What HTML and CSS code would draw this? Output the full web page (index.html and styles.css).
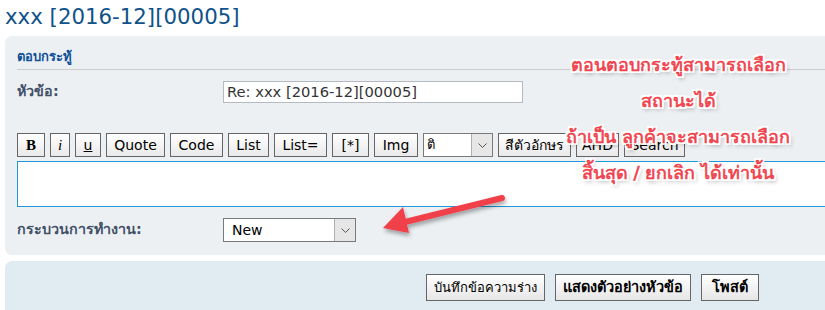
FILE: index.html
```html
<!DOCTYPE html>
<html lang="th">
<head>
<meta charset="utf-8">
<link rel="stylesheet" href="styles.css">
</head>
<body>
<div class="page">
  <h2 class="title">xxx [2016-12][00005]</h2>
  <div class="panel">
    <h3 class="panel-head">ตอบกระทู้</h3>
    <div class="row row-subject">
      <label class="lbl">หัวข้อ:</label>
      <div class="input">Re: xxx [2016-12][00005]</div>
    </div>
    <div class="toolbar">
      <span class="btn b">B</span>
      <span class="btn i">i</span>
      <span class="btn u">u</span>
      <span class="btn w-quote">Quote</span>
      <span class="btn w-code">Code</span>
      <span class="btn w-list">List</span>
      <span class="btn w-liste">List=</span>
      <span class="btn w-star">[*]</span>
      <span class="btn w-img">Img</span>
      <span class="sel sel-size"><span class="sel-text">ติ</span><span class="sel-arrow"><svg width="9" height="5" viewBox="0 0 9 5"><path d="M0.5 0.5 L4.5 4.5 L8.5 0.5" fill="none" stroke="#555" stroke-width="1"/></svg></span></span>
      <span class="btn w-color">สีตัวอักษร</span>
      <span class="btn w-ahd">AHD</span>
      <span class="btn w-search">Search</span>
    </div>
    <div class="textarea"></div>
    <div class="row row-status">
      <label class="lbl">กระบวนการทำงาน:</label>
      <span class="sel sel-status"><span class="sel-text">New</span><span class="sel-arrow"><svg width="9" height="5" viewBox="0 0 9 5"><path d="M0.5 0.5 L4.5 4.5 L8.5 0.5" fill="none" stroke="#555" stroke-width="1"/></svg></span></span>
    </div>
  </div>
  <div class="panel2">
    <span class="btn2">บันทึกข้อความร่าง</span>
    <span class="btn2 bold">แสดงตัวอย่างหัวข้อ</span>
    <span class="btn2 bold wide">โพสต์</span>
  </div>

  <div class="note">
    <div class="note-line">ตอนตอบกระทู้สามารถเลือก</div>
    <div class="note-line">สถานะได้</div>
    <div class="note-line">ถ้าเป็น ลูกค้าจะสามารถเลือก</div>
    <div class="note-line">สิ้นสุด / ยกเลิก ได้เท่านั้น</div>
  </div>
  <svg class="arrow" width="140" height="60" viewBox="0 0 140 60">
    <defs>
      <filter id="sh" x="-20%" y="-40%" width="140%" height="180%">
        <feDropShadow dx="1" dy="3" stdDeviation="2" flood-color="#000" flood-opacity="0.35"/>
      </filter>
    </defs>
    <g filter="url(#sh)">
      <line x1="127" y1="8" x2="30" y2="32" stroke="#f0404a" stroke-width="6" stroke-linecap="round"/>
      <path d="M8 38 L28 17 L34 43 Z" fill="#f0404a"/>
    </g>
  </svg>
</div>
</body>
</html>
```

FILE: styles.css
```css
html, body {
  margin: 0;
  padding: 0;
  background: #ffffff;
}
.page {
  position: relative;
  width: 825px;
  height: 310px;
  overflow: hidden;
  font-family: "DejaVu Sans", Tahoma, sans-serif;
}
.title {
  margin: 0;
  padding: 0 0 0 5px;
  height: 36px;
  line-height: 34px;
  font-size: 21.3px;
  font-weight: normal;
  color: #105289;
  white-space: nowrap;
}
.panel {
  margin-left: 5px;
  width: 860px;
  height: 219px;
  box-sizing: border-box;
  background: #ecf0f3;
  border-radius: 7px;
  padding: 10px 12px 0 12px;
}
.panel-head {
  margin: 0;
  height: 23px;
  line-height: 22px;
  font-size: 13px;
  font-weight: bold;
  color: #115098;
  border-bottom: 1px solid #cccccc;
}
.row {
  display: flex;
  align-items: center;
}
.row-subject {
  margin-top: 11px;
  height: 22px;
}
.lbl {
  width: 206px;
  flex: none;
  font-size: 14.3px;
  font-weight: bold;
  color: #425067;
  margin-top: -3px;
}
.input {
  width: 300px;
  height: 22px;
  box-sizing: border-box;
  border: 1px solid #b4bac0;
  background: #fff;
  font-size: 14.7px;
  line-height: 20px;
  padding-left: 3px;
  color: #333;
  white-space: nowrap;
}
.toolbar {
  margin-top: 30px;
  height: 24px;
  display: flex;
  gap: 5px;
}
.btn {
  height: 24px;
  box-sizing: border-box;
  border: 1px solid #666;
  background: linear-gradient(#ffffff, #e9e9e9);
  padding: 0;
  text-align: center;
  font-size: 14px;
  line-height: 22px;
  color: #000;
  white-space: nowrap;
  flex: none;
}
.btn.b { font-weight: bold; font-family: "Liberation Serif", serif; font-size: 15px; width: 28px; }
.btn.i { font-style: italic; font-family: "Liberation Serif", serif; font-size: 15px; width: 20px; }
.btn.u { text-decoration: underline; width: 26px; }
.w-quote { width: 59px; }
.w-code { width: 53px; }
.w-list { width: 41px; }
.w-liste { width: 53px; }
.w-star { width: 37px; }
.w-img { width: 44px; }
.w-color { width: 73px; }
.w-ahd { width: 43px; }
.w-search { width: 61px; }
.sel {
  display: flex;
  height: 24px;
  box-sizing: border-box;
  border: 1px solid #7a7a7a;
  background: #fff;
  flex: none;
}
.sel-size { width: 70px; }
.sel-status { width: 133px; height: 24px; }
.sel-text {
  flex: 1;
  font-size: 13px;
  line-height: 22px;
  padding-left: 3px;
  color: #000;
}
.sel-status .sel-text { padding-left: 8px; font-size: 14px; }
.sel-arrow {
  width: 20px;
  border-left: 1px solid #b0b0b0;
  background: #e6e6e6;
  display: flex;
  align-items: center;
  justify-content: center;
}
.textarea {
  margin-top: 4px;
  height: 46px;
  box-sizing: border-box;
  border: 1px solid #1e98d6;
  background: #fff;
}
.row-status {
  margin-top: 11px;
  height: 24px;
}
.panel2 {
  margin-top: 6px;
  margin-left: 5px;
  width: 860px;
  height: 60px;
  background: #e1ebf2;
  border-radius: 7px;
  display: flex;
  align-items: flex-start;
  padding: 13px 0 0 421px;
  box-sizing: border-box;
  gap: 10px;
}
.btn2 {
  height: 27px;
  box-sizing: border-box;
  border: 1px solid #666;
  background: linear-gradient(#ffffff, #e6e6e6);
  padding: 0 7px;
  font-size: 13px;
  line-height: 25px;
  color: #000;
  white-space: nowrap;
}
.btn2.bold { font-weight: bold; font-size: 14.5px; }
.btn2.wide { padding: 0 10px; }
.note {
  position: absolute;
  left: 558px;
  top: 48px;
  width: 240px;
  text-align: center;
  font-size: 18px;
  color: #f0404a;
}
.note-line {
  height: 36px;
  line-height: 34px;
  white-space: nowrap;
  -webkit-text-stroke: 0.6px #f0404a;
  text-shadow:
    0 0 2px #fff, 1px 1px 0 #fff, -1px -1px 0 #fff, 1px -1px 0 #fff, -1px 1px 0 #fff,
    2px 0 0 #fff, -2px 0 0 #fff, 0 2px 0 #fff, 0 -2px 0 #fff,
    2px 2px 0 #fff, -2px -2px 0 #fff, 2px -2px 0 #fff, -2px 2px 0 #fff,
    2px 3px 4px rgba(0,0,0,0.45);
}
.arrow {
  position: absolute;
  left: 375px;
  top: 190px;
}
```
